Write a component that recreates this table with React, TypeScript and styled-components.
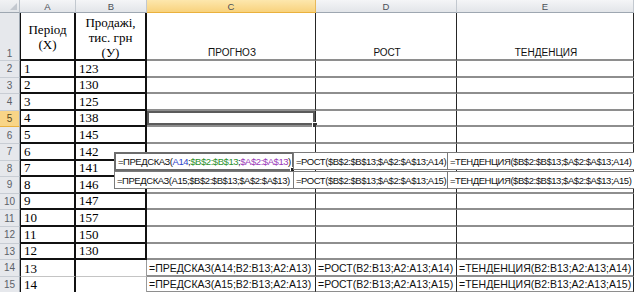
import React from "react";
import styled, { createGlobalStyle, css } from "styled-components";

const GlobalStyle = createGlobalStyle`
  html, body {
    margin: 0;
    padding: 0;
    background: #ffffff;
    overflow: hidden;
  }
`;

const calibri = css`
  font-family: "Liberation Sans", Arial, sans-serif;
  font-size: 9.5px;
  letter-spacing: -0.45px;
  color: #111;
`;

const serif = css`
  font-family: "Liberation Serif", "Times New Roman", serif;
  font-size: 13px;
  color: #000;
`;

const Sheet = styled.div`
  position: relative;
  width: 634px;
  height: 292px;
  overflow: hidden;
  background: #fff;
`;

const Grid = styled.div`
  display: grid;
  grid-template-columns: 20px 56px 71px 169px 141px 177px;
  grid-template-rows: 13px 48px repeat(14, 16.6px);
`;

const Corner = styled.div`
  position: relative;
  box-sizing: border-box;
  background: linear-gradient(#f1f2f4, #e2e5e9);
  border-right: 1px solid #b9c0c8;
  border-bottom: 1px solid #9ea7b1;

  &::after {
    content: "";
    position: absolute;
    right: 2px;
    bottom: 2px;
    border-left: 7px solid transparent;
    border-bottom: 7px solid #c3c8cf;
  }
`;

const ColHead = styled.div<{ $active?: boolean }>`
  box-sizing: border-box;
  display: flex;
  align-items: center;
  justify-content: center;
  font-family: "Liberation Sans", Arial, sans-serif;
  font-size: 9.5px;
  color: #4a4f57;
  background: ${(p) =>
    p.$active
      ? "linear-gradient(#fde7ad, #f8d27d)"
      : "linear-gradient(#f4f5f7, #e2e5e9)"};
  border-right: 1px solid ${(p) => (p.$active ? "#e7b85a" : "#c2c8cf")};
  border-bottom: 1px solid ${(p) => (p.$active ? "#eab13d" : "#9ea7b1")};
`;

const RowHead = styled.div<{ $active?: boolean; $bottom?: boolean }>`
  box-sizing: border-box;
  display: flex;
  align-items: ${(p) => (p.$bottom ? "flex-end" : "center")};
  justify-content: center;
  padding-bottom: ${(p) => (p.$bottom ? "1px" : "0")};
  font-family: "Liberation Sans", Arial, sans-serif;
  font-size: 10px;
  color: ${(p) => (p.$active ? "#5a4a20" : "#5c6168")};
  background: ${(p) => (p.$active ? "#f8d587" : "#e6e8ec")};
  border-right: 1px solid #9ea7b1;
  border-bottom: 1px solid ${(p) => (p.$active ? "#eab13d" : "#c8cdd4")};
`;

type Edge = "table" | "loose";

const DataCell = styled.div<{ $edge: Edge; $first?: boolean; $title?: boolean }>`
  ${serif};
  box-sizing: border-box;
  display: flex;
  align-items: ${(p) => (p.$title ? "center" : "flex-end")};
  justify-content: ${(p) => (p.$title ? "center" : "flex-start")};
  text-align: center;
  line-height: 15px;
  padding: ${(p) => (p.$title ? "2px 0 0" : "0 0 0 3px")};
  border-left: ${(p) => (p.$first ? "1px solid #111" : "none")};
  border-right: ${(p) =>
    p.$edge === "table" || p.$first ? "2px solid #111" : "1px solid #9a9a9a"};
  border-bottom: ${(p) =>
    p.$edge === "table" ? "2px solid #111" : "1px solid #c4c4c4"};
`;

const CalcCell = styled.div<{ $label?: boolean; $selected?: boolean }>`
  ${calibri};
  position: relative;
  box-sizing: border-box;
  display: flex;
  align-items: flex-end;
  justify-content: ${(p) => (p.$label ? "center" : "flex-start")};
  padding: 0 0 1px 2px;
  font-size: 10.5px;
  letter-spacing: 0;
  white-space: nowrap;
  overflow: hidden;
  border-right: 1px solid #262626;
  border-bottom: 2px solid #8e8e8e;
  ${(p) =>
    p.$label &&
    css`
      font-size: 10px;
    `}
  ${(p) =>
    p.$selected &&
    css`
      overflow: visible;
      box-shadow: inset 0 0 0 2px #5b5b5b;
      &::after {
        content: "";
        position: absolute;
        right: -3px;
        bottom: -3px;
        width: 4px;
        height: 4px;
        background: #333;
        border: 1px solid #fff;
      }
    `}
`;

const Strip = styled.div`
  position: absolute;
  left: 115px;
  top: 152px;
  display: flex;
  flex-direction: column;
`;

const StripRow = styled.div`
  display: flex;
`;

const FormulaBox = styled.div<{ $w: number; $active?: boolean }>`
  ${calibri};
  position: relative;
  box-sizing: border-box;
  width: ${(p) => p.$w}px;
  height: ${(p) => (p.$active ? 19 : 18)}px;
  display: flex;
  align-items: center;
  padding-left: 2px;
  white-space: nowrap;
  background: #fff;
  border: ${(p) => (p.$active ? "2px solid #6c6c6c" : "1px solid #7a7a7a")};
  margin-left: -1px;
  ${(p) =>
    p.$active &&
    css`
      &::after {
        content: "";
        position: absolute;
        right: -3px;
        bottom: -3px;
        width: 3px;
        height: 3px;
        background: #222;
        border: 1px solid #fff;
      }
    `}
`;

const Ref = styled.span<{ $c: string }>`
  color: ${(p) => p.$c};
`;

const values: [string, string][] = [
  ["1", "123"],
  ["2", "130"],
  ["3", "125"],
  ["4", "138"],
  ["5", "145"],
  ["6", "142"],
  ["7", "141"],
  ["8", "146"],
  ["9", "147"],
  ["10", "157"],
  ["11", "150"],
  ["12", "130"],
];

const tail = [
  { a: "13", ref: "A14" },
  { a: "14", ref: "A15" },
];

const App = () => {
  return (
    <>
      <GlobalStyle />
      <Sheet>
        <Grid>
          <Corner />
          {["A", "B", "C", "D", "E"].map((l) => (
            <ColHead key={l} $active={l === "C"}>
              {l}
            </ColHead>
          ))}

          <RowHead $bottom>1</RowHead>
          <DataCell $edge="table" $first $title>
            Період
            <br />
            (X)
          </DataCell>
          <DataCell $edge="table" $title>
            Продажі,
            <br />
            тис. грн
            <br />
            (У)
          </DataCell>
          <CalcCell $label>ПРОГНОЗ</CalcCell>
          <CalcCell $label>РОСТ</CalcCell>
          <CalcCell $label>ТЕНДЕНЦИЯ</CalcCell>

          {values.map(([a, b], i) => (
            <React.Fragment key={a}>
              <RowHead $active={i === 3}>{i + 2}</RowHead>
              <DataCell $edge="table" $first>
                {a}
              </DataCell>
              <DataCell $edge="table">{b}</DataCell>
              <CalcCell $selected={i === 3} />
              <CalcCell />
              <CalcCell />
            </React.Fragment>
          ))}

          {tail.map((t, i) => (
            <React.Fragment key={t.a}>
              <RowHead>{i + 14}</RowHead>
              <DataCell $edge="loose" $first>
                {t.a}
              </DataCell>
              <DataCell $edge="loose" />
              <CalcCell>=ПРЕДСКАЗ({t.ref};B2:B13;A2:A13)</CalcCell>
              <CalcCell>=РОСТ(B2:B13;A2:A13;{t.ref})</CalcCell>
              <CalcCell>=ТЕНДЕНЦИЯ(B2:B13;A2:A13;{t.ref})</CalcCell>
            </React.Fragment>
          ))}
        </Grid>

        <Strip>
          <StripRow>
            <FormulaBox $w={180} $active>
              =ПРЕДСКАЗ(<Ref $c="#2f45c8">A14</Ref>;
              <Ref $c="#2a8f2a">$B$2:$B$13</Ref>;
              <Ref $c="#9a39b8">$A$2:$A$13</Ref>)
            </FormulaBox>
            <FormulaBox $w={155}>=РОСТ($B$2:$B$13;$A$2:$A$13;A14)</FormulaBox>
            <FormulaBox $w={190}>=ТЕНДЕНЦИЯ($B$2:$B$13;$A$2:$A$13;A14)</FormulaBox>
          </StripRow>
          <StripRow>
            <FormulaBox $w={180}>=ПРЕДСКАЗ(A15;$B$2:$B$13;$A$2:$A$13)</FormulaBox>
            <FormulaBox $w={155}>=РОСТ($B$2:$B$13;$A$2:$A$13;A15)</FormulaBox>
            <FormulaBox $w={190}>=ТЕНДЕНЦИЯ($B$2:$B$13;$A$2:$A$13;A15)</FormulaBox>
          </StripRow>
        </Strip>
      </Sheet>
    </>
  );
};

export default App;
